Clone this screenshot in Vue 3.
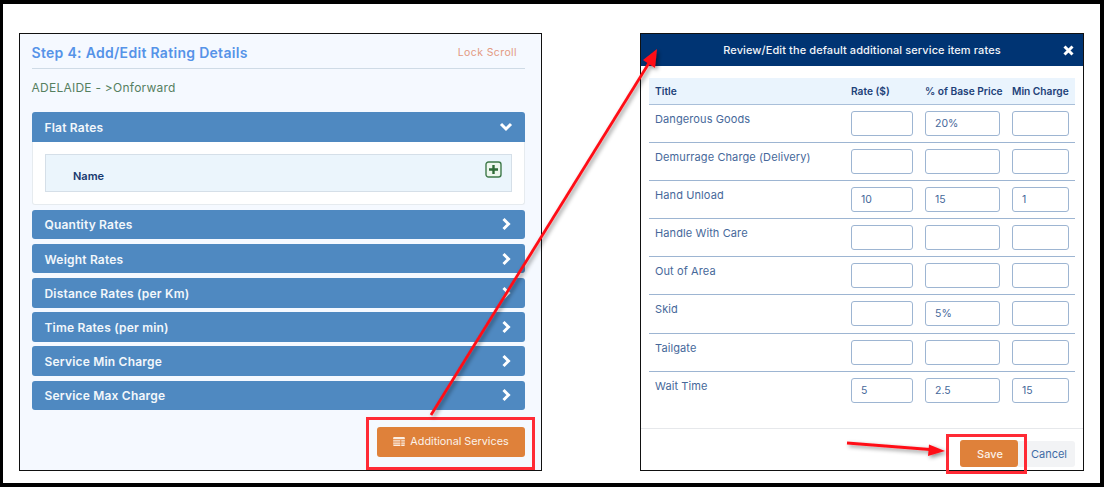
<script setup>
const collapsed = ['Quantity Rates', 'Weight Rates', 'Distance Rates (per Km)', 'Time Rates (per min)', 'Service Min Charge', 'Service Max Charge']
const rows = [
  { title: 'Dangerous Goods', rate: '', pct: '20%', min: '' },
  { title: 'Demurrage Charge (Delivery)', rate: '', pct: '', min: '' },
  { title: 'Hand Unload', rate: '10', pct: '15', min: '1' },
  { title: 'Handle With Care', rate: '', pct: '', min: '' },
  { title: 'Out of Area', rate: '', pct: '', min: '' },
  { title: 'Skid', rate: '', pct: '5%', min: '' },
  { title: 'Tailgate', rate: '', pct: '', min: '' },
  { title: 'Wait Time', rate: '5', pct: '2.5', min: '15' }
]
</script>

<template>
  <div class="page">
    <section class="panel">
      <div class="step-head">
        <h2>Step 4: Add/Edit Rating Details</h2>
        <span class="lock">Lock Scroll</span>
      </div>
      <p class="route">ADELAIDE - &gt;Onforward</p>
      <div class="acc-head">
        <span>Flat Rates</span>
        <svg class="chev" width="14" height="14" viewBox="0 0 14 14"><path d="M2 4 7 9 12 4" fill="none" stroke="#fff" stroke-width="3"/></svg>
      </div>
      <div class="acc-body">
        <div class="name-row">
          <span>Name</span>
          <svg class="plus" width="17" height="17" viewBox="0 0 17 17">
            <rect x="1" y="1" width="15" height="15" rx="2.5" fill="#eef7ee" stroke="#3f7a4a" stroke-width="1.4"/>
            <path d="M8.5 4v9M4 8.500h9" stroke="#2f6b37" stroke-width="2.400"/>
          </svg>
        </div>
      </div>
      <div v-for="name in collapsed" :key="name" class="acc-head closed">
        <span>{{ name }}</span>
        <svg class="chev" width="14" height="14" viewBox="0 0 14 14"><path d="M4.500 2 9.500 7 4.500 12" fill="none" stroke="#fff" stroke-width="3"/></svg>
      </div>
      <div class="panel-foot">
        <button class="btn-orange wide">
          <svg width="12" height="9" viewBox="0 0 13 10"><path d="M0 1a1 1 0 0 1 1-1h11a1 1 0 0 1 1 1v1.600H0zM0 3.500h8v1.500H0zM9 3.500h4v1.500H9zM0 6h8v1.500H0zM9 6h4v1.500H9zM0 8.400h8V10H1a1 1 0 0 1-1-1zM9 8.400h4V9a1 1 0 0 1-1 1H9z" fill="#fbeee2"/></svg>
          Additional Services
        </button>
      </div>
    </section>

    <section class="modal">
      <header class="modal-head">
        <span>Review/Edit the default additional service item rates</span>
        <svg class="close" width="11" height="11" viewBox="0 0 11 11"><path d="M1.500 1.500l8 8M9.500 1.500l-8 8" stroke="#fff" stroke-width="3"/></svg>
      </header>
      <div class="modal-body">
        <div class="grid head">
          <span>Title</span><span>Rate ($)</span><span>% of Base Price</span><span>Min Charge</span>
        </div>
        <div v-for="row in rows" :key="row.title" class="grid row">
          <span class="title">{{ row.title }}</span>
          <input :value="row.rate" readonly>
          <input :value="row.pct" readonly>
          <input :value="row.min" readonly>
        </div>
      </div>
      <footer class="modal-foot">
        <button class="btn-orange save">Save</button>
        <button class="cancel">Cancel</button>
      </footer>
    </section>

    <div class="mark mark-a"></div>
    <div class="mark mark-b"></div>
    <svg class="arrows" width="1104" height="487" viewBox="0 0 1104 487">
      <defs>
        <filter id="sh" x="-20%" y="-20%" width="140%" height="140%">
          <feDropShadow dx="2" dy="2" stdDeviation="2" flood-color="#000" flood-opacity="0.45"/>
        </filter>
      </defs>
      <g filter="url(#sh)" fill="#ff0f17">
        <path d="M431 415 649 63" stroke="#ff0f17" stroke-width="2.800" fill="none"/>
        <path d="M657 49 643 60 655 68z"/>
        <path d="M847 443 930 449.500" stroke="#ff0f17" stroke-width="2.800" fill="none"/>
        <path d="M945 451 929 444.500 928 456z"/>
      </g>
    </svg>
  </div>
</template>

<style>
html, body { margin: 0; background: #fff; }
</style>

<style scoped>
.page {
  position: relative;
  box-sizing: border-box;
  width: 1104px;
  height: 487px;
  border: solid #000;
  border-width: 4px 4px 4px 3px;
  padding: 29px 16px 12px 16px;
  display: flex;
  justify-content: space-between;
  background: #fff;
  font-family: Inter, "Liberation Sans", sans-serif;
  overflow: hidden;
}
.panel {
  box-sizing: border-box;
  width: 523px;
  height: 438px;
  border: 1.5px solid #111;
  background: #f5f9ff;
  padding: 0 16px 0 11.500px;
  display: flex;
  flex-direction: column;
}
.step-head {
  height: 35px;
  flex: none;
  border-bottom: 1.500px solid #cfdbe6;
  display: flex;
  align-items: center;
  justify-content: space-between;
  padding-top: 3px;
  box-sizing: border-box;
}
h2 {
  margin: 0;
  font-size: 14px;
  font-weight: 600;
  color: #5593e8;
  letter-spacing: 0.3px;
}
.lock { font-size: 10.500px; color: #e39a82; letter-spacing: 0.4px; margin-right: 8px; }
.route {
  margin: 0;
  height: 43px;
  flex: none;
  line-height: 38px;
  font-size: 12px;
  color: #55805f;
  letter-spacing: 0.25px;
}
.acc-head {
  box-sizing: border-box;
  flex: none;
  height: 29.500px;
  background: #4f89c1;
  border-radius: 3px 3px 0 0;
  padding: 1px 13px 0;
  display: flex;
  align-items: center;
  justify-content: space-between;
  color: #f2f7fb;
  font-size: 12px;
  font-weight: 600;
  letter-spacing: 0.2px;
}
.acc-head.closed { border-radius: 3px; margin-bottom: 4.700px; }
.chev { margin-right: -1px; margin-top: -1px; }
.acc-body {
  box-sizing: border-box;
  flex: none;
  height: 63.500px;
  margin-bottom: 4.700px;
  background: #fff;
  border: 1px solid #e6ebef;
  border-top: none;
  border-radius: 0 0 3px 3px;
  padding: 12.500px 12px 0;
}
.name-row {
  box-sizing: border-box;
  height: 38px;
  background: #ebf5fc;
  border: solid #d5dfe8;
  border-width: 1px 1px 1.500px 1px;
  padding: 0 9px 0 27.500px;
  display: flex;
  align-items: center;
  justify-content: space-between;
  font-size: 11px;
  font-weight: 600;
  color: #17386e;
}
.name-row span { padding-top: 6px; }
.plus { margin-top: -8px; }
.panel-foot {
  display: flex;
  justify-content: flex-end;
  padding-top: 12px;
}
.btn-orange {
  border: none;
  background: #df813a;
  color: #fbf1e8;
  font-family: inherit;
  border-radius: 3px;
  padding: 0;
}
.wide {
  width: 148px;
  height: 30px;
  font-size: 10.800px;
  display: flex;
  align-items: center;
  justify-content: center;
  gap: 5px;
  padding-bottom: 1px;
}
.modal {
  box-sizing: border-box;
  width: 444px;
  height: 438px;
  border: 1.500px solid #111;
  background: #fff;
  display: flex;
  flex-direction: column;
}
.modal-head {
  flex: none;
  height: 32px;
  background: #003473;
  color: #f2f5f9;
  font-size: 11px;
  font-weight: 500;
  letter-spacing: 0.1px;
  display: flex;
  align-items: center;
  justify-content: center;
  position: relative;
}
.close { position: absolute; right: 9px; top: 11px; }
.modal-body { flex: none; height: 362px; padding: 12px 8px 0; box-sizing: border-box; }
.grid {
  display: grid;
  grid-template-columns: 184px 62px 75px 57px;
  column-gap: 12px;
  padding: 0 6px;
}
.head {
  height: 26.500px;
  background: #eaf4fd;
  border-bottom: 1px solid #a9bfd9;
  box-sizing: border-box;
  align-items: center;
  font-size: 10.200px;
  font-weight: 600;
  color: #1d4178;
  white-space: nowrap;
}
.row {
  box-sizing: border-box;
  height: 38.200px;
  border-bottom: 1px solid #9db5d2;
  padding-top: 6px;
}
.row:last-child { border-bottom: none; }
.title {
  font-size: 11px;
  color: #46689a;
  letter-spacing: 0.1px;
  padding-top: 1px;
  white-space: nowrap;
}
input {
  box-sizing: border-box;
  width: 100%;
  height: 25px;
  border: 1px solid #9db5d2;
  border-radius: 3px;
  background: #fff;
  color: #46689a;
  font-family: inherit;
  font-size: 10.500px;
  padding: 0 0 0 9px;
  outline: none;
}
.modal-foot {
  flex: 1;
  border-top: 1px solid #e6e8eb;
  display: flex;
  justify-content: flex-end;
  align-items: flex-start;
  padding: 11px 8px 0 0;
}
.save { width: 58px; height: 27px; font-size: 11px; font-weight: 500; padding-left: 2px; }
.cancel {
  width: 57px;
  height: 26px;
  margin-top: 1px;
  border: none;
  background: #f2f3f5;
  border-radius: 0 3px 3px 0;
  color: #3f6ca6;
  font-family: inherit;
  font-size: 11px;
  padding: 0 0 0 5px;
}
.mark {
  position: absolute;
  box-sizing: border-box;
  border: 3px solid #ff2a35;
}
.mark-a { left: 363px; top: 413px; width: 169px; height: 53px; }
.mark-b { left: 943px; top: 430px; width: 81px; height: 40px; }
.arrows { position: absolute; left: -3px; top: -4px; pointer-events: none; }
</style>
